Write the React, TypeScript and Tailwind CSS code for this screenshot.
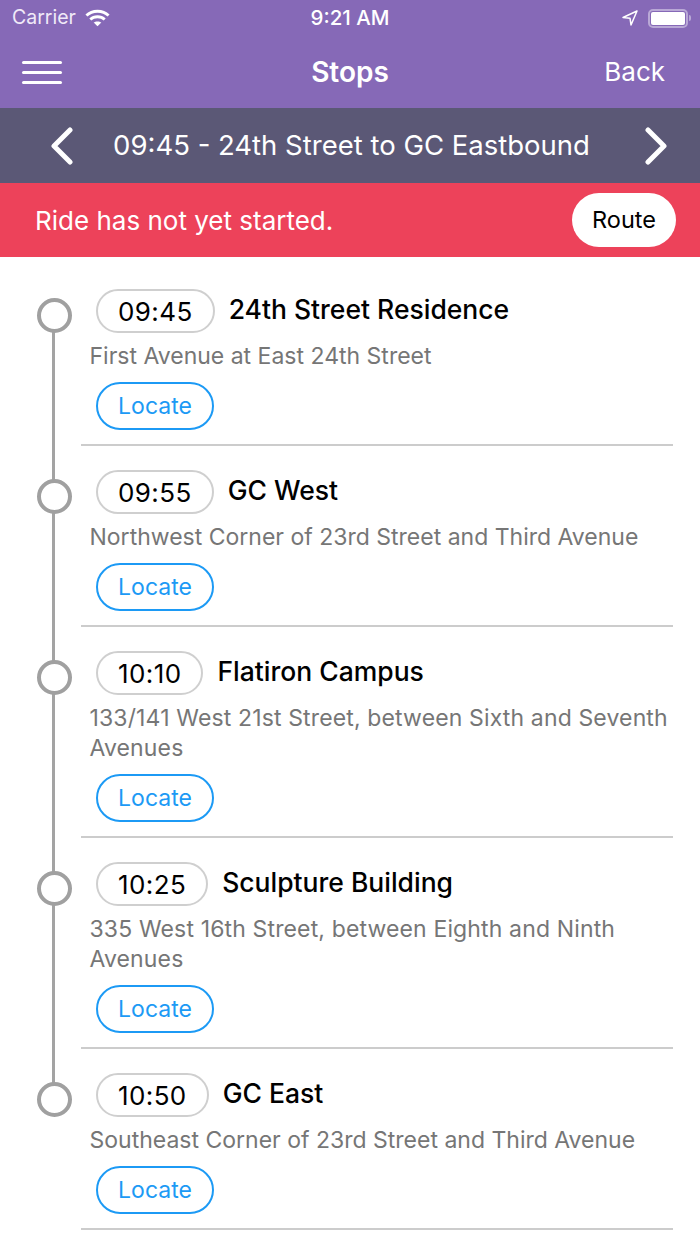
import React from "react";

type Stop = { time: string; name: string; address: string[]; wide?: boolean; last?: boolean };

const stops: Stop[] = [
  { time: "09:45", name: "24th Street Residence", address: ["First Avenue at East 24th Street"] },
  { time: "09:55", name: "GC West", address: ["Northwest Corner of 23rd Street and Third Avenue"] },
  { time: "10:10", name: "Flatiron Campus", address: ["133/141 West 21st Street, between Sixth and Seventh", "Avenues"], wide: true },
  { time: "10:25", name: "Sculpture Building", address: ["335 West 16th Street, between Eighth and Ninth", "Avenues"], wide: true },
  { time: "10:50", name: "GC East", address: ["Southeast Corner of 23rd Street and Third Avenue"], last: true },
];

const StatusBar = () => (
  <div className="h-[36px] px-3 flex items-center justify-between text-white relative">
    <div className="flex items-center gap-[9px]">
      <span className="text-[#f0eaf8] text-[19.5px]">Carrier</span>
      <svg width="25" height="20" viewBox="0 0 26 20" fill="none" stroke="white" strokeWidth="3">
        <path d="M1.5 7.5C7.5 1.5 18.500 1.500 24.500 7.500" />
        <path d="M5.500 11.500C9.500 7.800 16.500 7.800 20.500 11.500" />
        <path d="M13 18.500L9 14.800C11 13.200 15 13.200 17 14.800Z" fill="white" stroke="none" />
      </svg>
    </div>
    <span className="absolute left-0 right-0 text-center font-medium text-[20.5px]">9:21 AM</span>
    <div className="flex items-center gap-[10px]">
      <svg width="16" height="16" viewBox="0 0 16 16" fill="none" stroke="white" strokeWidth="1.500" strokeLinejoin="round">
        <path d="M15 1L1 7.500L8 8.200L9 15Z" />
      </svg>
      <div className="w-[40px] h-[19px] border-2 border-[#b9a8d6] rounded-[5px] p-[1px] relative">
        <div className="w-full h-full bg-white rounded-[2px]" />
        <div className="absolute right-[-5px] top-[4px] w-[2px] h-[6px] bg-[#b9a8d6] rounded-r" />
      </div>
    </div>
  </div>
);

const StopRow = ({ stop }: { stop: Stop }) => (
  <div className="relative pl-[81px] pr-[27px]">
    {!stop.last && <div className="absolute left-[52px] top-[50px] bottom-[-51px] w-[3px] bg-[#a3a3a3]" />}
    <div className="absolute left-[37px] top-[33px] w-[35px] h-[35px] rounded-full border-[4px] border-[#a0a0a0] bg-white z-10" />
    <div className="border-b-2 border-[#cccccc] pt-[24px] pb-[14px]">
      <div className="flex items-center gap-[14px] pl-[15px]">
        <div className="h-[44px] px-[20px] border-2 border-[#cfcfcf] rounded-full flex items-center text-[26px] tracking-[0.4px] text-black">
          {stop.time}
        </div>
        <div className="text-[26.500px] font-medium text-black mb-[2px]">{stop.name}</div>
      </div>
      <div className={`mt-[8px] pl-[8.500px] text-[23px] leading-[30px] text-[#767676] ${stop.wide ? "tracking-[0.14px]" : ""}`}>
        {stop.address.map((line) => (
          <div key={line}>{line}</div>
        ))}
      </div>
      <div className="mt-[11px] ml-[15px] w-[118px] h-[48px] border-2 border-[#1c9af5] rounded-full flex items-center justify-center text-[23px] text-[#1c9af5]">
        Locate
      </div>
    </div>
  </div>
);

export default function App() {
  return (
    <div className="w-[700px] h-[1244px] overflow-hidden bg-white font-['Inter','Noto_Sans',sans-serif]">
      {/* Header */}
      <div className="bg-[#8669b7] h-[108px]">
        <StatusBar />
        <div className="h-[72px] pl-[22px] pr-[35px] flex items-center justify-between relative text-white">
          <div className="flex flex-col gap-[7px] w-[40px]">
            <div className="h-[3px] bg-white rounded" />
            <div className="h-[3px] bg-white rounded" />
            <div className="h-[3px] bg-white rounded" />
          </div>
          <span className="absolute left-0 right-0 text-center text-[28px] font-semibold">Stops</span>
          <span className="text-[26px] mb-[2px]">Back</span>
        </div>
      </div>

      {/* Ride switcher */}
      <div className="bg-[#5b5876] h-[75px] pl-[50px] pr-[32px] flex items-center justify-between text-white">
        <svg width="24" height="38" viewBox="0 0 24 38" fill="none" stroke="white" strokeWidth="5" strokeLinecap="round" strokeLinejoin="round">
          <path d="M20 3L4 19L20 35" />
        </svg>
        <span className="text-[27.500px] mr-[15px]">09:45 - 24th Street to GC Eastbound</span>
        <svg width="24" height="38" viewBox="0 0 24 38" fill="none" stroke="white" strokeWidth="5" strokeLinecap="round" strokeLinejoin="round">
          <path d="M4 3L20 19L4 35" />
        </svg>
      </div>

      {/* Status */}
      <div className="bg-[#ed425a] h-[74px] pl-[35px] pr-[24px] flex items-center justify-between">
        <span className="text-white text-[26px]">Ride has not yet started.</span>
        <div className="w-[104px] h-[54px] bg-white rounded-full flex items-center justify-center text-[23.500px] text-black">
          Route
        </div>
      </div>

      <div className="pt-[8px]">
        {stops.map((stop) => (
          <StopRow key={stop.time} stop={stop} />
        ))}
      </div>
    </div>
  );
}
